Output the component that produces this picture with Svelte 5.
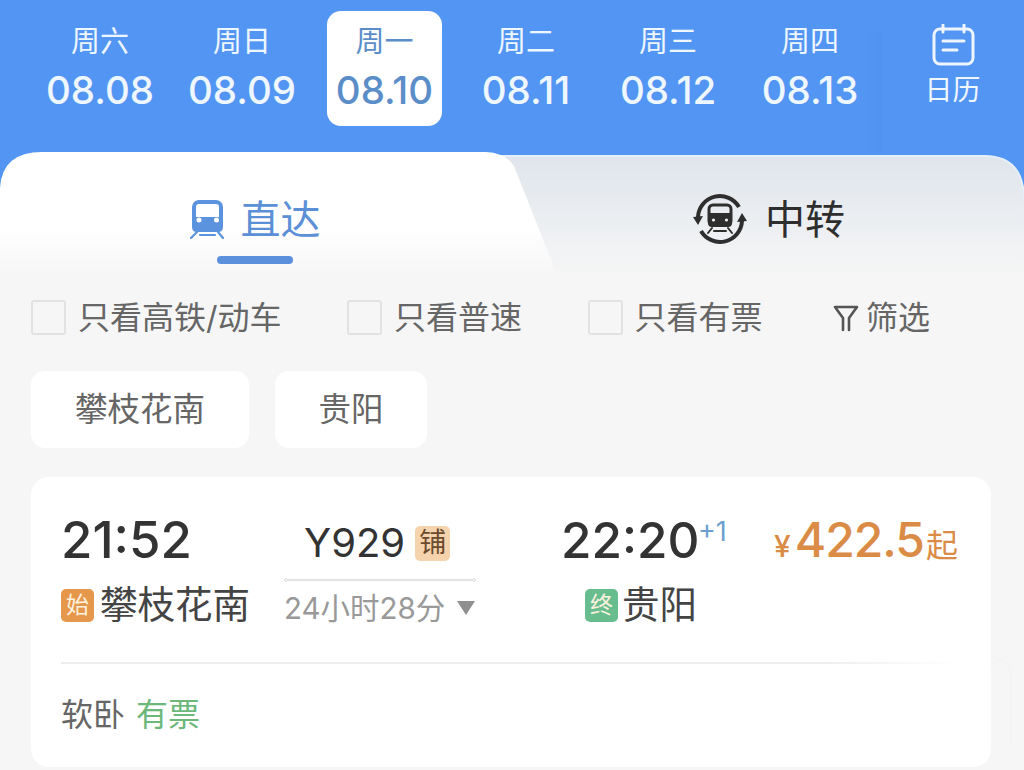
<script>
  const days = [
    { w: '周六', d: '08.08' },
    { w: '周日', d: '08.09' },
    { w: '周一', d: '08.10', on: true },
    { w: '周二', d: '08.11' },
    { w: '周三', d: '08.12' },
    { w: '周四', d: '08.13' }
  ];
  const filters = ['只看高铁/动车', '只看普速', '只看有票'];
</script>

<div class="page">
  <header class="dates">
    {#each days as day}
      <div class="day" class:on={day.on}>
        <span class="week">{day.w}</span>
        <span class="date">{day.d}</span>
      </div>
    {/each}
    <div class="cal">
      <svg width="44" height="42" viewBox="0 0 44 42" fill="none" stroke="#eef5ff" stroke-width="3" stroke-linecap="round">
        <rect x="3" y="5" width="39" height="35" rx="6" />
        <path d="M12 1v7M33 1v7M12 17h21M12 26h14" />
      </svg>
      <span>日历</span>
    </div>
  </header>

  <div class="tabs">
    <svg class="tabs-bg" width="1024" height="125" viewBox="0 0 1024 125" aria-hidden="true">
      <defs>
        <linearGradient id="gr" x1="0" y1="0" x2="0" y2="1">
          <stop offset="0" stop-color="#dfe5ec" />
          <stop offset="1" stop-color="#f6f6f6" />
        </linearGradient>
        <linearGradient id="wh" x1="0" y1="0" x2="0" y2="1">
          <stop offset="0.6" stop-color="#ffffff" />
          <stop offset="1" stop-color="#f6f6f6" />
        </linearGradient>
      </defs>
      <path d="M470 4H984Q1024 4 1024 48V125H470Z" fill="url(#gr)" />
      <path d="M470 4H984Q1024 4 1024 48" fill="none" stroke="#e6eef7" stroke-width="2" />
      <path d="M0 36Q2 0 42 0H486Q506 1 514 14L550 105L558 125H0Z" fill="url(#wh)" />
    </svg>
    <div class="tab active">
      <svg width="34" height="39" viewBox="0 0 34 39" fill="none">
        <rect x="4" y="2" width="27" height="24" rx="5" stroke="#5b93de" stroke-width="4" />
        <path d="M2 17H33V27Q33 32 28 32H7Q2 32 2 27Z" fill="#5b93de" />
        <circle cx="9" cy="20" r="2.5" fill="#fff" />
        <circle cx="26.500" cy="20" r="2.5" fill="#fff" />
        <path d="M7 32L1 38M28 32L33 38M10 35H25" stroke="#5b93de" stroke-width="2.2" stroke-linecap="round" />
      </svg>
      <span>直达</span>
      <i class="bar"></i>
    </div>
    <div class="tab">
      <svg width="54" height="54" viewBox="0 0 54 54" fill="none">
        <path d="M5 25A22 22 0 0 1 46 15M49 29A22 22 0 0 1 8 39" stroke="#2e2e2e" stroke-width="4" />
        <path d="M0 25L10 24L5 33ZM54 29L44 30L49 21Z" fill="#2e2e2e" />
        <rect x="16" y="13" width="22" height="20" rx="4" stroke="#2e2e2e" stroke-width="3" />
        <path d="M15 21H39V31Q39 35 35 35H19Q15 35 15 31Z" fill="#2e2e2e" />
        <circle cx="20.500" cy="28" r="1.6" fill="#eef0f3" />
        <circle cx="33.500" cy="28" r="1.6" fill="#eef0f3" />
        <path d="M19 36L15 41M35 36L39 41M21 39H33" stroke="#2e2e2e" stroke-width="2" stroke-linecap="round" />
      </svg>
      <span>中转</span>
    </div>
  </div>

  <div class="filters">
    {#each filters as f}
      <label class="check"><i class="box"></i><span class="lbl">{f}</span></label>
    {/each}
    <div class="screen">
      <svg width="26" height="28" viewBox="0 0 26 28" fill="none" stroke="#555" stroke-width="2.6" stroke-linejoin="round" stroke-linecap="round">
        <path d="M2 3H24L16 14V26M10 26V14L2 3" />
      </svg>
      <span class="lbl">筛选</span>
    </div>
  </div>

  <div class="chips">
    <span class="chip wide">攀枝花南</span>
    <span class="chip">贵阳</span>
  </div>

  <section class="card">
    <div class="route">
      <div class="col depart">
        <div class="time">21:52</div>
        <div class="station"><b class="tag start">始</b>攀枝花南</div>
      </div>
      <div class="col mid">
        <div class="train">Y929<b class="pu">铺</b></div>
        <div class="line"></div>
        <div class="dur">24小时28分<i class="tri"></i></div>
      </div>
      <div class="col arrive">
        <div class="time">22:20<sup>+1</sup></div>
        <div class="station"><b class="tag end">终</b>贵阳</div>
      </div>
      <div class="price"><small>¥</small>422.5<small class="qi">起</small></div>
    </div>
    <div class="rule"></div>
    <div class="seat">软卧<em>有票</em></div>
    <i class="mark"></i>
  </section>
</div>

<style>
  :global(body) {
    margin: 0;
    background: #f6f6f6;
  }
  .page {
    width: 1024px;
    height: 770px;
    overflow: hidden;
    background: #f6f6f6;
    font-family: Inter, "Noto Sans CJK SC", sans-serif;
    color: #333;
  }
  .dates {
    height: 152px;
    box-sizing: border-box;
    padding: 11px 0 0 29px;
    display: flex;
    align-items: flex-start;
    background: #5295f2;
    color: #eef6ff;
  }
  .day {
    width: 142px;
    height: 115px;
    box-sizing: border-box;
    padding-top: 11px;
    display: flex;
    flex-direction: column;
    align-items: center;
  }
  .day.on {
    background: #fff;
    color: #5b8ec8;
    border-radius: 14px;
    width: 115px;
    margin: 0 13px 0 14px;
  }
  .week {
    font-size: 29px;
    line-height: 40px;
  }
  .date {
    font-size: 38.5px;
    line-height: 46px;
    margin-top: 5px;
    font-weight: 450;
  }
  .cal {
    position: relative;
    width: 143px;
    height: 128px;
    margin-top: 13px;
    display: flex;
    flex-direction: column;
    align-items: center;
    font-size: 28px;
    line-height: 38px;
  }
  .cal::before {
    content: "";
    position: absolute;
    left: -14px;
    top: 8px;
    width: 16px;
    height: 120px;
    background: linear-gradient(90deg, rgba(50, 110, 200, 0), rgba(50, 110, 200, 0.07));
  }
  .cal svg {
    margin-bottom: 5px;
  }
  .tabs {
    position: relative;
    height: 125px;
    display: flex;
    background: #5295f2;
  }
  .tabs-bg {
    position: absolute;
    left: 0;
    top: 0;
  }
  .tab {
    position: relative;
    flex: 1;
    height: 125px;
    box-sizing: border-box;
    padding-top: 5px;
    display: flex;
    align-items: center;
    justify-content: center;
    gap: 18px;
    font-size: 40px;
    font-weight: 400;
    color: #2e2e2e;
  }
  .tab svg {
    margin-top: 4px;
  }
  .tab.active {
    color: #5b8fd6;
    gap: 17px;
    padding-right: 4px;
  }
  .bar {
    position: absolute;
    left: 217px;
    top: 104px;
    width: 76px;
    height: 8px;
    border-radius: 4px;
    background: #5b90dc;
  }
  .filters {
    display: flex;
    align-items: center;
    gap: 65.500px;
    padding: 23px 0 0 31px;
    height: 35px;
    font-size: 32px;
    color: #666;
  }
  .check {
    display: flex;
    align-items: center;
    gap: 12px;
  }
  .lbl {
    margin-top: -6px;
  }
  .box {
    width: 35px;
    height: 35px;
    box-sizing: border-box;
    border: 2px solid #e2e2e2;
    border-radius: 3px;
  }
  .screen {
    display: flex;
    align-items: center;
    gap: 7px;
    margin-left: 5px;
  }
  .chips {
    display: flex;
    gap: 26px;
    padding: 36px 0 29px 31px;
  }
  .chip {
    width: 152px;
    height: 77px;
    box-sizing: border-box;
    padding-bottom: 6px;
    border-radius: 14px;
    background: #fff;
    display: flex;
    align-items: center;
    justify-content: center;
    font-size: 32.5px;
    color: #666;
  }
  .chip.wide {
    width: 218px;
  }
  .card {
    position: relative;
    margin-left: 31px;
    width: 960px;
    height: 290px;
    box-sizing: border-box;
    background: #fff;
    border-radius: 18px;
    padding: 36px 33px 0 30px;
  }
  .route {
    display: flex;
    height: 114px;
  }
  .col {
    display: flex;
    flex-direction: column;
    flex: none;
  }
  .depart {
    width: 223px;
  }
  .time {
    position: relative;
    font-size: 51px;
    line-height: 54px;
    color: #333;
    font-weight: 450;
  }
  sup {
    position: absolute;
    left: 137px;
    top: -1px;
    font-size: 27px;
    line-height: 40px;
    color: #6a9fd0;
    font-weight: 400;
  }
  .station {
    display: flex;
    align-items: center;
    gap: 6px;
    font-size: 37.5px;
    line-height: 44px;
    margin-top: 16px;
    color: #444;
  }
  .tag {
    width: 33px;
    height: 33px;
    border-radius: 5px;
    display: flex;
    align-items: center;
    justify-content: center;
    font-size: 23px;
    font-weight: 400;
    color: #fdf1df;
  }
  .start {
    background: #e5984c;
  }
  .end {
    background: #68bd8f;
  }
  .mid {
    width: 192px;
  }
  .train {
    display: flex;
    align-items: center;
    padding-left: 20px;
    gap: 10px;
    font-size: 40px;
    line-height: 54px;
    color: #333;
    margin-top: 3px;
  }
  .pu {
    width: 35px;
    height: 35px;
    border-radius: 5px;
    background: #f4d3ad;
    color: #6b4a2e;
    font-size: 27px;
    font-weight: 400;
    display: flex;
    align-items: center;
    justify-content: center;
  }
  .line {
    position: relative;
    flex: none;
    height: 2px;
    margin-top: 9px;
    background: #e2e2e2;
  }
  .line::before,
  .line::after {
    content: "";
    position: absolute;
    top: -1px;
    width: 4px;
    height: 4px;
    border: 1px solid #dcdcdc;
    border-radius: 50%;
    background: #fff;
    box-sizing: border-box;
  }
  .line::before {
    left: 0;
  }
  .line::after {
    right: 0;
  }
  .dur {
    display: flex;
    align-items: center;
    justify-content: space-between;
    font-size: 29.5px;
    line-height: 44px;
    color: #999;
    margin-top: 5px;
  }
  .tri {
    width: 0;
    height: 0;
    border-left: 9px solid transparent;
    border-right: 9px solid transparent;
    border-top: 14px solid #8f8f8f;
    margin-right: 1px;
  }
  .arrive {
    width: 280px;
    padding-left: 85px;
    box-sizing: border-box;
  }
  .arrive .time {
    font-size: 49.5px;
  }
  .arrive .station {
    padding-left: 24px;
    gap: 4px;
  }
  .price {
    margin-left: auto;
    display: flex;
    align-items: baseline;
    height: 54px;
    font-size: 48px;
    letter-spacing: -1px;
    line-height: 54px;
    font-weight: 500;
    color: #da8c47;
  }
  .price small {
    font-size: 30px;
    font-weight: 500;
    margin-right: 5px;
  }
  .price .qi {
    font-size: 32px;
    font-weight: 400;
    margin: 0 1px 0 2px;
  }
  .rule {
    height: 2px;
    margin-top: 35px;
    background: linear-gradient(90deg, #eeeeee 85%, rgba(238, 238, 238, 0));
  }
  .seat {
    margin-top: 31px;
    font-size: 32px;
    line-height: 40px;
    color: #666;
  }
  em {
    font-style: normal;
    color: #6bb87a;
    margin-left: 11px;
  }
  .mark {
    position: absolute;
    left: 958px;
    top: 183px;
    width: 20px;
    height: 92px;
    border: 1px solid rgba(0, 0, 0, 0.015);
    border-radius: 12px;
  }
</style>
